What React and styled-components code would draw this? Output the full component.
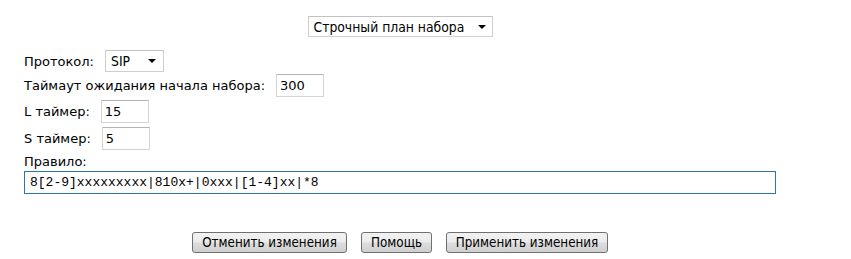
import React from 'react'
import styled, { createGlobalStyle } from 'styled-components'

const GlobalStyle = createGlobalStyle`
  html, body { margin: 0; padding: 0; background: #ffffff; }
  body { font-family: "DejaVu Sans", Verdana, sans-serif; font-size: 13px; color: #000; }
`

const Page = styled.div`
  width: 800px;
  padding-top: 16px;
  display: flex;
  flex-direction: column;
`

const TopBar = styled.div`
  display: flex;
  justify-content: center;
  height: 21px;
  margin-bottom: 13px;
`

const Form = styled.div`
  display: flex;
  flex-direction: column;
  padding-left: 24px;
  padding-right: 24px;
`

const Row = styled.div`
  display: flex;
  align-items: center;
  height: ${p => p.h || 23}px;
  margin-bottom: ${p => p.mb || 0}px;
`

const Label = styled.span`
  margin-right: 11px;
  white-space: nowrap;
`

const FakeSelect = styled.div`
  box-sizing: border-box;
  width: ${p => p.w}px;
  height: ${p => p.h || 22}px;
  border: 1px solid #cfcfcf;
  border-top-color: #c2c2c2;
  background: #fff;
  display: flex;
  align-items: center;
  padding-left: 5px;
  padding-right: ${p => p.pr || 6}px;
  font-size: 13.8px;
  font-family: "DejaVu Sans Condensed", "DejaVu Sans", sans-serif;
`

const SelectText = styled.span`
  flex: 1;
  white-space: nowrap;
`

const Arrow = styled.span`
  width: 0;
  height: 0;
  border-left: 4px solid transparent;
  border-right: 4px solid transparent;
  border-top: 4px solid #000;
`

const TextBox = styled.div`
  box-sizing: border-box;
  width: ${p => p.w || 48}px;
  height: 23px;
  border: 1px solid #d4d4d4;
  border-top-color: #b5b5b5;
  background: #fff;
  display: flex;
  align-items: center;
  padding-left: 3px;
  font-size: 13px;
`

const RuleBox = styled.div`
  box-sizing: border-box;
  width: 752px;
  height: 23px;
  border: 1px solid #3174a8;
  display: flex;
  align-items: center;
  padding-left: 5px;
  font-family: "Liberation Mono", "Courier New", monospace;
  font-size: 13px;
`

const Buttons = styled.div`
  display: flex;
  justify-content: center;
  gap: 14px;
  margin-top: 38px;
`

const Button = styled.button`
  box-sizing: border-box;
  height: 21px;
  width: ${p => p.w}px;
  padding: 0;
  border: 1px solid #707070;
  border-radius: 3px;
  background: linear-gradient(#f2f2f2 0%, #ebebeb 48%, #dddddd 52%, #cfcfcf 100%);
  font-family: "DejaVu Sans Condensed", "DejaVu Sans", sans-serif;
  font-size: 13.3px;
  color: #000;
`

export default function App() {
  return (
    <Page>
      <GlobalStyle />
      <TopBar>
        <FakeSelect w={185} h={21}>
          <SelectText>Строчный план набора</SelectText>
          <Arrow />
        </FakeSelect>
      </TopBar>
      <Form>
        <Row h={22} mb={2}>
          <Label>Протокол:</Label>
          <FakeSelect w={59} pr={7}>
            <SelectText>SIP</SelectText>
            <Arrow />
          </FakeSelect>
        </Row>
        <Row mb={3}>
          <Label>Таймаут ожидания начала набора:</Label>
          <TextBox>300</TextBox>
        </Row>
        <Row mb={4}>
          <Label>L таймер:</Label>
          <TextBox>15</TextBox>
        </Row>
        <Row mb={2}>
          <Label>S таймер:</Label>
          <TextBox>5</TextBox>
        </Row>
        <Row h={18} mb={1}>
          <Label>Правило:</Label>
        </Row>
        <RuleBox>8[2-9]xxxxxxxxx|810x+|0xxx|[1-4]xx|*8</RuleBox>
      </Form>
      <Buttons>
        <Button w={155}>Отменить изменения</Button>
        <Button w={71}>Помощь</Button>
        <Button w={162}>Применить изменения</Button>
      </Buttons>
    </Page>
  )
}
